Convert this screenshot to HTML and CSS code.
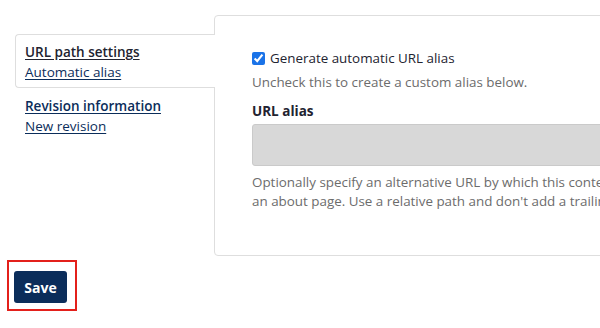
FILE: index.html
```html
<!DOCTYPE html>
<html lang="en">
<head>
    <meta charset="UTF-8">
    <meta name="viewport" content="width=device-width, initial-scale=1.0">
    <title>Edit page</title>
    <link rel="stylesheet" href="styles.css">
</head>
<body>

    <main class="page">
       <div class="vtabs">
          <ul class="tab-list">
             <li class="tab active">
                <a href="#" class="tab-title">URL path settings</a>
                <a href="#" class="tab-summary">Automatic alias</a>
             </li>
             <li class="tab">
                <a href="#" class="tab-title">Revision information</a>
                <a href="#" class="tab-summary">New revision</a>
             </li>
          </ul>

          <div class="tab-pane">
             <label class="check-row">
                <input type="checkbox" checked>
                <span>Generate automatic URL alias</span>
             </label>
             <p class="desc">Uncheck this to create a custom alias below.</p>

             <label class="field-label" for="alias">URL alias</label>
             <input type="text" id="alias" class="field-input" disabled>
             <p class="desc long">Optionally specify an alternative URL by which this content can be accessed. For example, type "/about" when writing<br>an about page. Use a relative path and don't add a trailing slash or the URL alias won't work.</p>
          </div>
       </div>

       <div class="actions">
          <button class="save-btn">Save</button>
       </div>
    </main>

</body>
</html>
```

FILE: styles.css
```css
*{
    margin: 0;
    padding: 0;
    box-sizing: border-box;
}

body{
    font-family: "Open Sans", "Liberation Sans", sans-serif;
    font-size: 13.4px;
    color: #222330;
    background-color: #fff;
    overflow: hidden;
}

.page{
    padding: 15px 0 0 15px;
    width: 1000px;
}

.vtabs{
    display: flex;
    align-items: flex-start;
}

.tab-list{
    list-style: none;
    width: 199px;
    margin-top: 19px;
    position: relative;
    z-index: 1;
}

.tab{
    padding: 7px 8px 5px 9px;
    margin-right: -1px;
    border: 1px solid transparent;
    border-right: none;
    border-radius: 4px 0 0 4px;
}

.tab.active{
    background-color: #fff;
    border-color: #dedede;
}

.tab a{
    display: block;
    line-height: 20px;
    font-size: 13.5px;
    color: #0b2d5a;
    text-decoration: underline;
    text-underline-offset: 2px;
}

.tab-title{
    font-weight: 600;
}

.tab.active .tab-title{
    color: #222330;
}

.tab-pane{
    width: 760px;
    height: 241px;
    border: 1px solid #dedede;
    border-radius: 4px;
    padding: 32px 37px 0 37px;
}

.check-row{
    display: flex;
    align-items: center;
    gap: 5px;
    font-size: 13.4px;
    line-height: 20px;
}

.check-row input{
    width: 13px;
    height: 13px;
    accent-color: #1a73e8;
}

.desc{
    color: #6c6c6c;
    font-size: 13.4px;
    line-height: 20px;
    margin-top: 4px;
}

.desc.long{
    line-height: 19px;
    margin-top: 7px;
    white-space: nowrap;
}

.field-label{
    display: block;
    font-weight: 700;
    font-size: 13.5px;
    line-height: 20px;
    margin-top: 9px;
}

.field-input{
    display: block;
    width: 100%;
    height: 42px;
    margin-top: 3px;
    background-color: #d8d8d8;
    border: 1px solid #cacaca;
    border-radius: 3px;
}

.actions{
    margin-top: 4px;
    margin-left: -8px;
    width: 70px;
    height: 51px;
    border: 2px solid #e3201b;
    padding: 9px 0 0 5px;
}

.save-btn{
    font-family: "Open Sans", "Liberation Sans", sans-serif;
    font-size: 14px;
    font-weight: 700;
    color: #fff;
    background-color: #0b2d5a;
    border: none;
    border-radius: 3px;
    width: 53px;
    height: 32px;
}
```
